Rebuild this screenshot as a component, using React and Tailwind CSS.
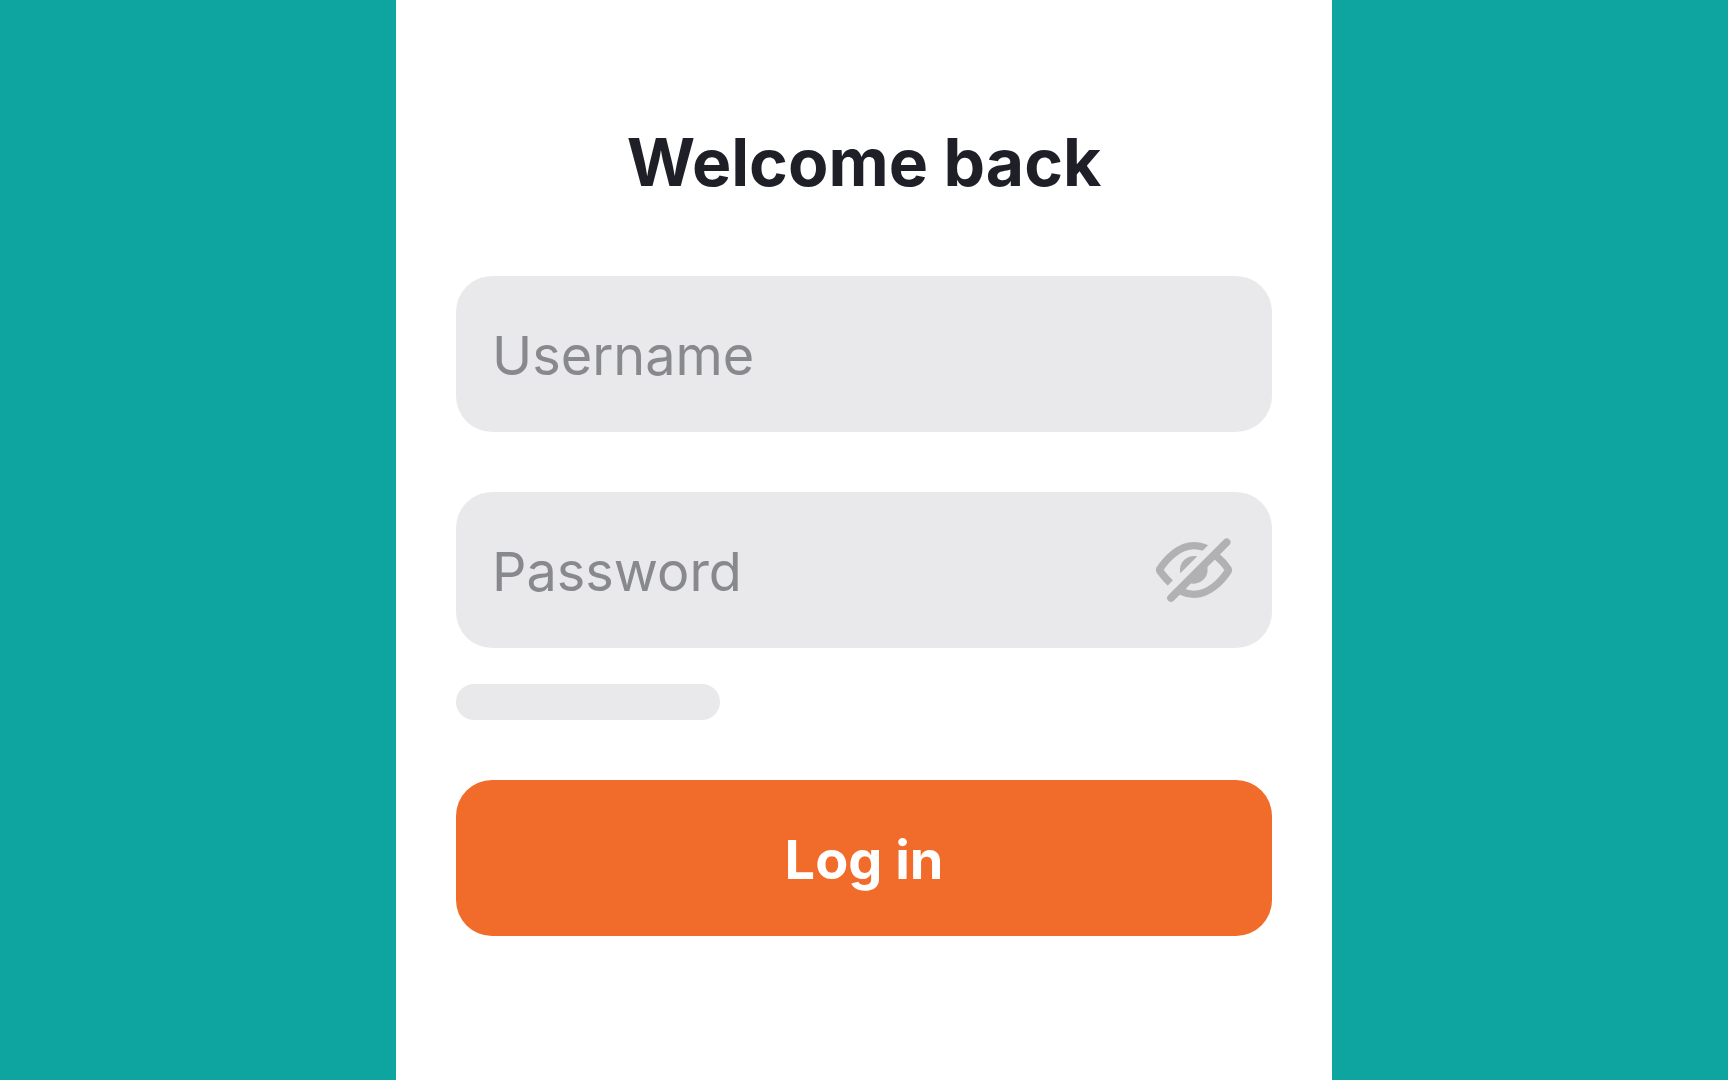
import React, { useState } from 'react';

const EyeOffIcon = () => (
  <svg
    viewBox="36 24 252 252"
    className="w-[84px] h-[84px]"
    fill="none"
    stroke="currentColor"
    strokeWidth="22"
    strokeLinejoin="round"
    aria-hidden="true"
  >
    <clipPath id="eye-left-half">
      <path d="M36 24H256L36 244Z" />
    </clipPath>
    {/* Lids */}
    <g clipPath="url(#eye-left-half)">
      <path d="M220 98C200 82 180 77 162 77C118 77 80 115 59 148Q58 150 59 152C72 171 84 183 104 202" />
    </g>
    <path d="M230 109C245 121 256 134 265 148Q266 150 265 152C244 185 206 223 162 223C149 223 137 220 124 214" />
    {/* Pupil */}
    <path d="M121 160A42 42 0 0 1 172 109Z" fill="currentColor" stroke="none" />
    <path d="M198 129A42 42 0 0 1 141 186Z" fill="currentColor" stroke="none" />
    {/* Slash */}
    <path d="M93 234L260 67" strokeWidth="23" strokeLinecap="round" />
  </svg>
);

const Field = ({ label, children, ...inputProps }) => (
  <div className="flex items-center rounded-[36px] bg-[#e9e9eb] px-9">
    <input
      aria-label={label}
      placeholder={label}
      className="min-w-0 flex-1 bg-transparent pt-[38px] pb-[34px] text-[54px] leading-[84px] text-[#1f1f28] placeholder:text-[#88898c] outline-none"
      {...inputProps}
    />
    {children}
  </div>
);

const LoginForm = () => {
  const [username, setUsername] = useState('');
  const [password, setPassword] = useState('');
  const [showPassword, setShowPassword] = useState(false);

  const handleSubmit = (e) => {
    e.preventDefault();
  };

  return (
    <form onSubmit={handleSubmit} className="flex flex-col">
      <div className="flex flex-col gap-15">
        <Field
          label="Username"
          type="text"
          name="username"
          value={username}
          onChange={(e) => setUsername(e.target.value)}
        />
        <Field
          label="Password"
          type={showPassword ? 'text' : 'password'}
          name="password"
          value={password}
          onChange={(e) => setPassword(e.target.value)}
        >
          <button
            type="button"
            aria-label="Toggle password visibility"
            onClick={() => setShowPassword(!showPassword)}
            className="shrink-0 text-[#b1b1b4]"
          >
            <EyeOffIcon />
          </button>
        </Field>
      </div>

      {/* Help link skeleton */}
      <div className="mt-9 h-9 w-66 rounded-full bg-[#e9e9eb]" />

      <button
        type="submit"
        className="mt-15 w-full rounded-[36px] bg-[#f16b2b] pt-[38px] pb-[34px] text-[54px] leading-[84px] font-bold text-white"
      >
        Log in
      </button>
    </form>
  );
};

const App = () => {
  return (
    <div className="flex min-h-screen justify-center bg-[#0ea4a0] font-['Inter',sans-serif]">
      <main className="w-full max-w-[936px] bg-white px-15 pt-30 pb-36">
        <h1 className="mb-18 text-center text-[66px] leading-[84px] font-bold text-[#1f1f28]">
          Welcome back
        </h1>
        <LoginForm />
      </main>
    </div>
  );
};

export default App;
